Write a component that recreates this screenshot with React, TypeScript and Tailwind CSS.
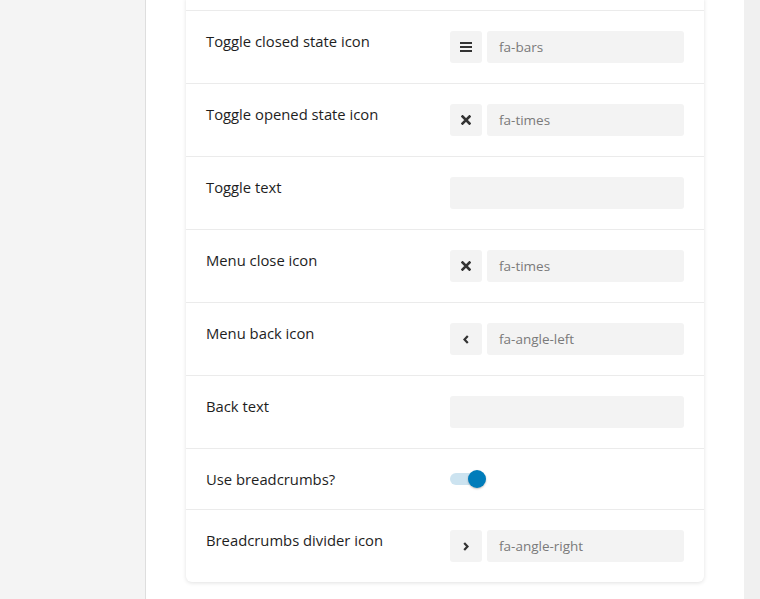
import type { ReactNode } from 'react';

function BarsIcon() {
  return (
    <svg width="12" height="10" viewBox="0 0 12 10" fill="#333">
      <rect x="0" y="0" width="12" height="2" />
      <rect x="0" y="4" width="12" height="2" />
      <rect x="0" y="8" width="12" height="2" />
    </svg>
  );
}

function TimesIcon() {
  return (
    <svg width="10" height="10" viewBox="0 0 10 10" stroke="#333" strokeWidth="2.6" strokeLinecap="square">
      <path d="M1.5 1.5 L8.5 8.5 M8.5 1.5 L1.5 8.5" />
    </svg>
  );
}

function AngleIcon({ dir }: { dir: 'left' | 'right' }) {
  return (
    <svg width="6" height="9" viewBox="0 0 6 9" fill="none" stroke="#333" strokeWidth="2.2">
      {dir === 'left' ? <path d="M4.8 1 L1.5 4.5 L4.8 8" /> : <path d="M1.2 1 L4.5 4.5 L1.2 8" />}
    </svg>
  );
}

function IconField({ icon, value }: { icon: ReactNode; value: string }) {
  return (
    <div className="flex gap-[5px]">
      <div className="w-8 h-8 rounded-[3px] bg-[#f3f3f3] flex items-center justify-center">{icon}</div>
      <div className="flex-1 h-8 rounded-[3px] bg-[#f3f3f3] px-3 flex items-center text-[13.5px] text-[#7a7a7a]">
        {value}
      </div>
    </div>
  );
}

function TextField() {
  return <div className="h-8 rounded-[3px] bg-[#f3f3f3]" />;
}

function Row({ label, children, last }: { label: string; children: ReactNode; last?: boolean }) {
  return (
    <div className={`grid grid-cols-[244px_234px] px-5 py-5 ${last ? '' : 'border-b border-[#ebebeb]'}`}>
      <div className="text-[14.8px] leading-[21px] text-[#1e1e1e]">{label}</div>
      <div>{children}</div>
    </div>
  );
}

export default function App() {
  return (
    <div
      className="h-[599px] overflow-hidden flex bg-[#f4f4f4]"
      style={{ fontFamily: '"Open Sans", "Noto Sans", sans-serif' }}
    >
      <div className="w-[145px] shrink-0" />
      <div className="w-[599px] shrink-0 bg-white border-l border-[#dedede] pl-[40px]">
        <div className="w-[518px] -mt-[2px] bg-white rounded-b-md shadow-[0_1px_4px_rgba(0,0,0,0.12)]">
          <div className="h-[13px] border-b border-[#ebebeb]" />
          <Row label="Toggle closed state icon">
            <IconField icon={<BarsIcon />} value="fa-bars" />
          </Row>
          <Row label="Toggle opened state icon">
            <IconField icon={<TimesIcon />} value="fa-times" />
          </Row>
          <Row label="Toggle text">
            <TextField />
          </Row>
          <Row label="Menu close icon">
            <IconField icon={<TimesIcon />} value="fa-times" />
          </Row>
          <Row label="Menu back icon">
            <IconField icon={<AngleIcon dir="left" />} value="fa-angle-left" />
          </Row>
          <Row label="Back text">
            <TextField />
          </Row>
          <div className="grid grid-cols-[244px_234px] px-5 py-5 border-b border-[#ebebeb]">
            <div className="text-[14.8px] leading-[20px] text-[#1e1e1e]">Use breadcrumbs?</div>
            <div className="flex items-center h-[20px]">
              <div className="relative w-[36px] h-[20px] flex items-center">
                <div className="w-[30px] h-[12px] rounded-full bg-[#cce3f0]" />
                <div className="absolute left-[18px] top-[1px] w-[18px] h-[18px] rounded-full bg-[#007cba] shadow-[0_1px_2px_rgba(0,0,0,0.25)]" />
              </div>
            </div>
          </div>
          <Row label="Breadcrumbs divider icon" last>
            <IconField icon={<AngleIcon dir="right" />} value="fa-angle-right" />
          </Row>
        </div>
      </div>
      <div className="flex-1 bg-[#f0f0f0]" />
    </div>
  );
}
